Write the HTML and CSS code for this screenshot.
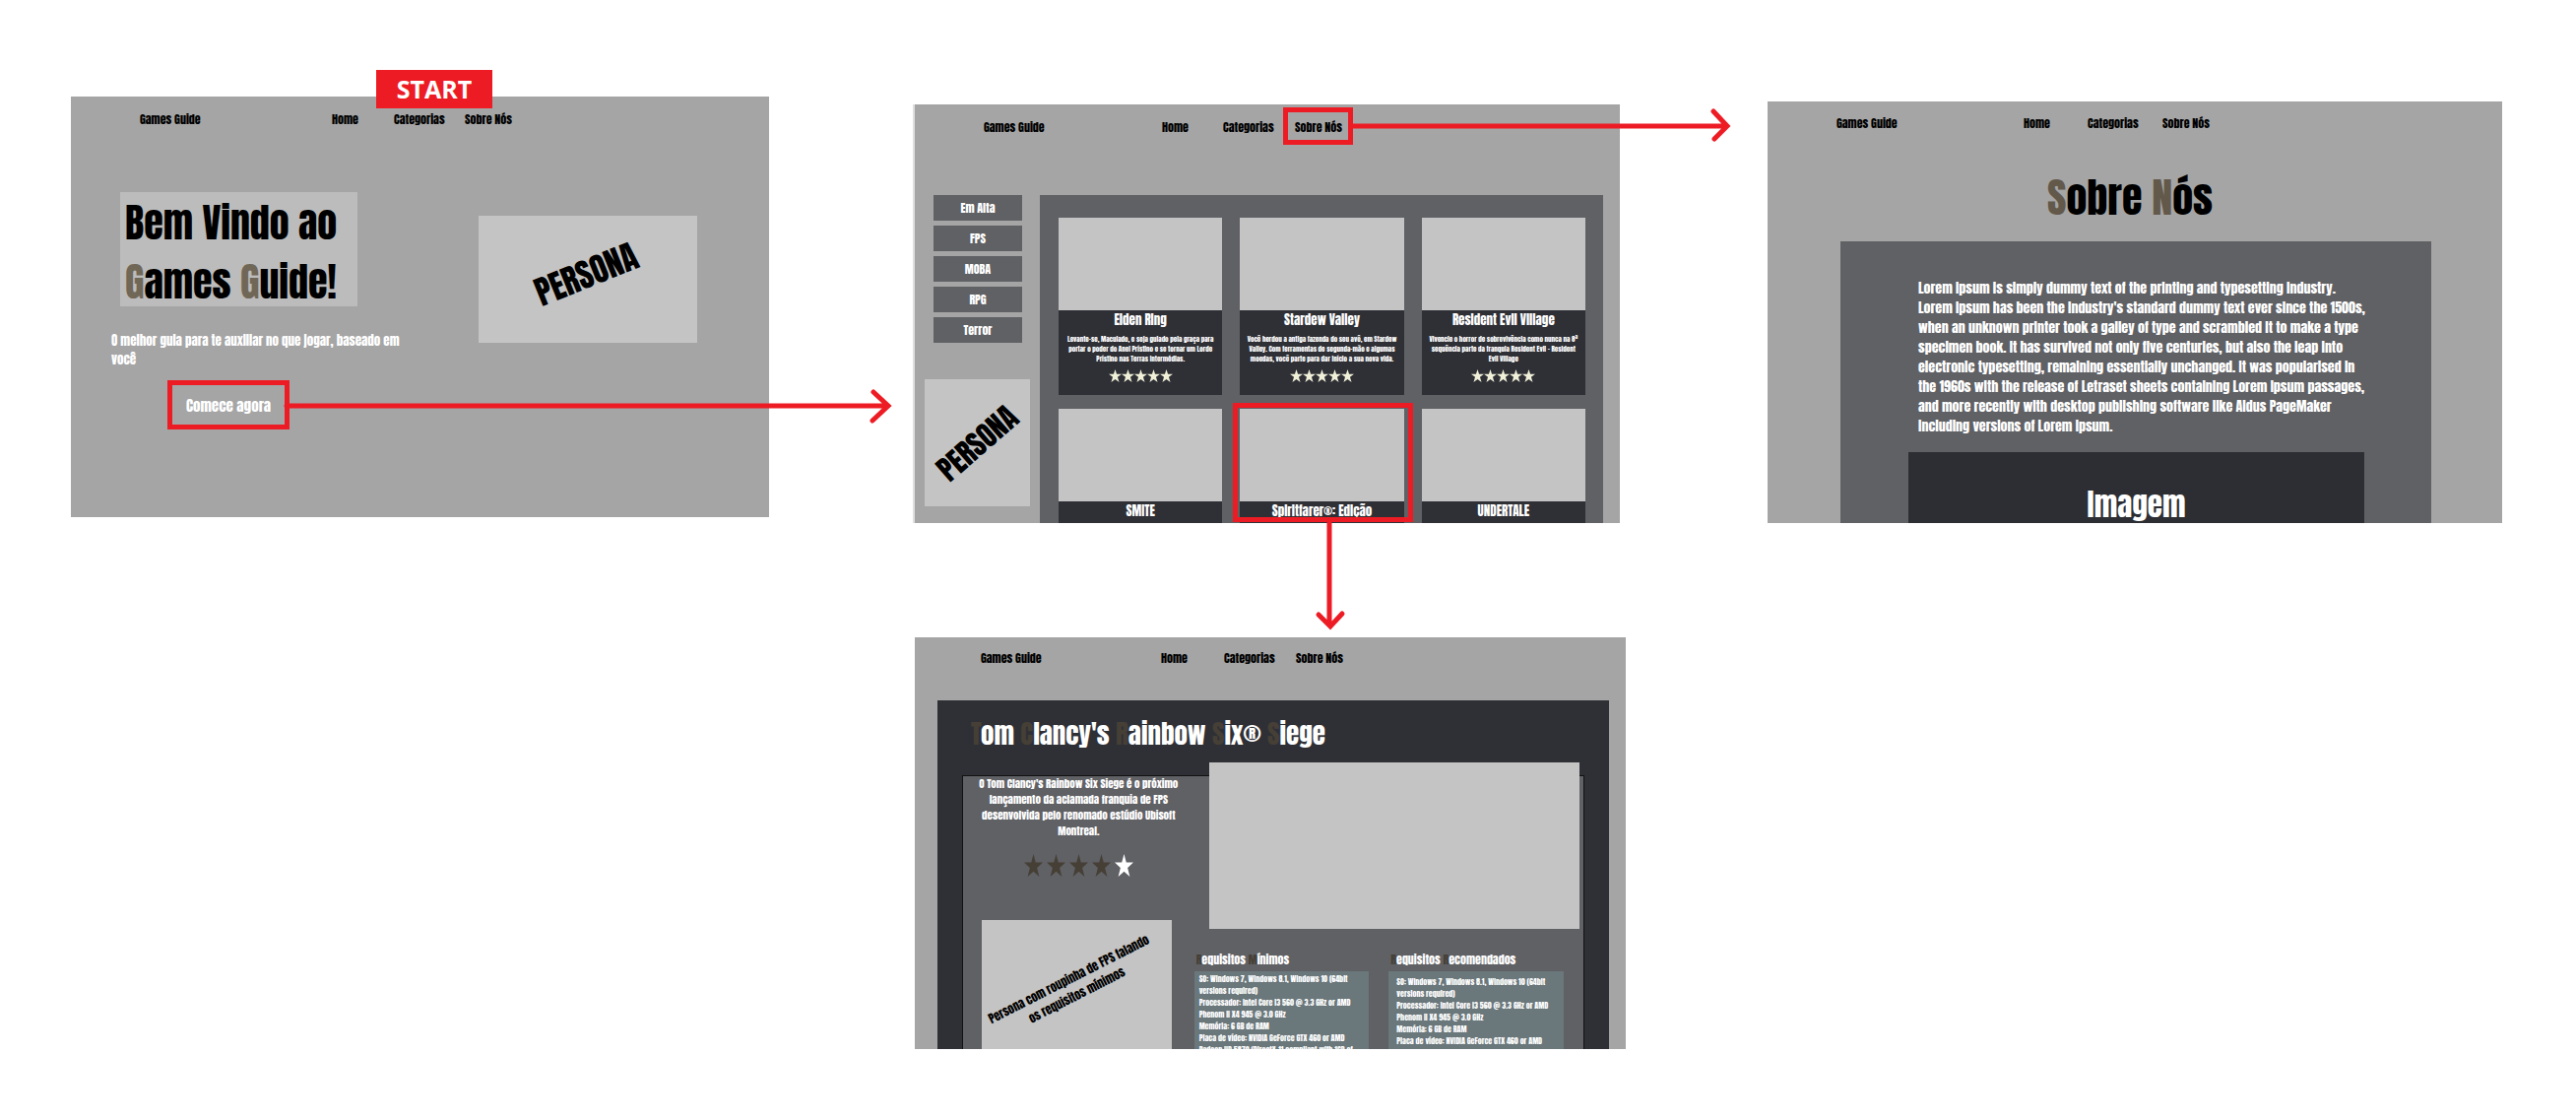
FILE: index.html
```html
<!DOCTYPE html>
<html lang="pt-BR">
<head>
<meta charset="utf-8">
<title>Games Guide – fluxo de telas</title>
<link rel="stylesheet" href="styles.css">
</head>
<body>
<svg class="defs" width="0" height="0" aria-hidden="true">
  <symbol id="star" viewBox="0 0 20 22" preserveAspectRatio="none"><path d="M10 0l2.4 8.2H20l-6.2 5.1L16.200 22 10 17l-6.200 5 2.400-8.700L0 8.200h7.600z"/></symbol>
</svg>
<main class="board">

  <section class="screen screen--home">
    <span class="start">START</span>
    <nav class="nav">
      <a href="#">Games Guide</a><a href="#">Home</a><a href="#">Categorias</a><a href="#">Sobre Nós</a>
    </nav>
    <div class="hero">
      <div class="hero__copy">
        <h1 class="hero__title">Bem Vindo ao<br><span class="tan">G</span>ames <span class="tan">G</span>uide!</h1>
        <p class="hero__text">O melhor guia para te auxiliar no que jogar, baseado em<br>você</p>
        <button class="cta" type="button">Comece agora
          <svg class="arrow arrow--cta" width="616" height="42" viewBox="0 0 616 42"><path d="M0 21H610M596 7l15 14-16 15"/></svg>
        </button>
      </div>
      <div class="hero__persona"><span>PERSONA</span></div>
    </div>
  </section>

  <section class="screen screen--list">
    <nav class="nav">
      <a href="#">Games Guide</a><a href="#">Home</a><a href="#">Categorias</a><a class="marked" href="#">Sobre Nós<svg class="arrow arrow--nav" width="388" height="42" viewBox="0 0 388 42"><path d="M0 21H380M367 6l14 15-13 13"/></svg></a>
    </nav>
    <div class="catalog">
      <aside class="side">
        <button type="button">Em Alta</button>
        <button type="button">FPS</button>
        <button type="button">MOBA</button>
        <button type="button">RPG</button>
        <button type="button">Terror</button>
        <div class="side__persona"><span>PERSONA</span></div>
      </aside>
      <div class="games">
        <article class="card">
          <div class="card__img"></div>
          <h2>Elden Ring</h2>
          <p>Levante-se, Maculado, e seja guiado pela graça para<br>portar o poder do Anel Prístino e se tornar um Lorde<br>Prístino nas Terras Intermédias.</p>
          <div class="stars"><svg><use href="#star"/></svg><svg><use href="#star"/></svg><svg><use href="#star"/></svg><svg><use href="#star"/></svg><svg><use href="#star"/></svg></div>
        </article>
        <article class="card">
          <div class="card__img"></div>
          <h2>Stardew Valley</h2>
          <p>Você herdou a antiga fazenda do seu avô, em Stardew<br>Valley. Com ferramentas de segunda-mão e algumas<br>moedas, você parte para dar início a sua nova vida.</p>
          <div class="stars"><svg><use href="#star"/></svg><svg><use href="#star"/></svg><svg><use href="#star"/></svg><svg><use href="#star"/></svg><svg><use href="#star"/></svg></div>
        </article>
        <article class="card">
          <div class="card__img"></div>
          <h2>Resident Evil Village</h2>
          <p>Vivencie o horror de sobrevivência como nunca na 8ª<br>sequência parte da franquia Resident Evil - Resident<br>Evil Village</p>
          <div class="stars"><svg><use href="#star"/></svg><svg><use href="#star"/></svg><svg><use href="#star"/></svg><svg><use href="#star"/></svg><svg><use href="#star"/></svg></div>
        </article>
        <article class="card">
          <div class="card__img"></div>
          <h2>SMITE</h2>
        </article>
        <article class="card card--marked">
          <div class="card__img"></div>
          <h2>Spiritfarer®: Edição</h2>
        </article>
        <article class="card">
          <div class="card__img"></div>
          <h2>UNDERTALE</h2>
        </article>
      </div>
    </div>
    <svg class="arrow arrow--down" width="42" height="110" viewBox="0 0 42 110"><path d="M21 0V102M10 93l12 12 12-13"/></svg>
  </section>

  <section class="screen screen--about">
    <nav class="nav">
      <a href="#">Games Guide</a><a href="#">Home</a><a href="#">Categorias</a><a href="#">Sobre Nós</a>
    </nav>
    <h1 class="about__title"><span class="tan">S</span>obre <span class="tan">N</span>ós</h1>
    <div class="about">
      <p>Lorem Ipsum is simply dummy text of the printing and typesetting industry.<br>Lorem Ipsum has been the industry's standard dummy text ever since the 1500s,<br>when an unknown printer took a galley of type and scrambled it to make a type<br>specimen book. It has survived not only five centuries, but also the leap into<br>electronic typesetting, remaining essentially unchanged. It was popularised in<br>the 1960s with the release of Letraset sheets containing Lorem Ipsum passages,<br>and more recently with desktop publishing software like Aldus PageMaker<br>including versions of Lorem Ipsum.</p>
      <div class="about__img">Imagem</div>
    </div>
  </section>

  <section class="screen screen--game">
    <nav class="nav">
      <a href="#">Games Guide</a><a href="#">Home</a><a href="#">Categorias</a><a href="#">Sobre Nós</a>
    </nav>
    <div class="game">
      <h1><span class="tan">T</span>om <span class="tan">C</span>lancy's <span class="tan">R</span>ainbow <span class="tan">S</span>ix® <span class="tan">S</span>iege</h1>
      <div class="game__body">
        <div class="game__info">
          <p>O Tom Clancy's Rainbow Six Siege é o próximo<br>lançamento da aclamada franquia de FPS<br>desenvolvida pelo renomado estúdio Ubisoft<br>Montreal.</p>
          <div class="stars stars--big"><svg><use href="#star"/></svg><svg><use href="#star"/></svg><svg><use href="#star"/></svg><svg><use href="#star"/></svg><svg><use href="#star"/></svg></div>
          <div class="game__persona"><span>Persona com roupinha de FPS falando<br>os requisitos mínimos</span></div>
        </div>
        <div class="game__media">
          <div class="game__shot"></div>
          <div class="reqs">
            <section>
              <h2><span class="tan">R</span>equisitos <span class="tan">M</span>ínimos</h2>
              <p>SO: Windows 7, Windows 8.1, Windows 10 (64bit<br>versions required)<br>Processador: Intel Core i3 560 @ 3.3 GHz or AMD<br>Phenom II X4 945 @ 3.0 GHz<br>Memória: 6 GB de RAM<br>Placa de vídeo: NVIDIA GeForce GTX 460 or AMD<br>Radeon HD 5870 (DirectX-11 compliant with 1GB of</p>
            </section>
            <section>
              <h2><span class="tan">R</span>equisitos <span class="tan">R</span>ecomendados</h2>
              <p class="reqs__rec">SO: Windows 7, Windows 8.1, Windows 10 (64bit<br>versions required)<br>Processador: Intel Core i3 560 @ 3.3 GHz or AMD<br>Phenom II X4 945 @ 3.0 GHz<br>Memória: 6 GB de RAM<br>Placa de vídeo: NVIDIA GeForce GTX 460 or AMD</p>
            </section>
          </div>
        </div>
      </div>
    </div>
  </section>

</main>
</body>
</html>
```
FILE: styles.css
```css
:root {
  --red: #ed1c24;
  --bg: #a5a5a5;
  --light: #c4c4c4;
  --panel: #606165;
  --dark: #2f3036;
}

*, *::after { box-sizing: border-box; }

body {
  margin: 0;
  background: #fff;
  font-family: Anton, "Roboto Condensed", "Open Sans Condensed", sans-serif;
  font-weight: 400;
  color: #fff;
  white-space: nowrap;
}

h1, h2, p { margin: 0; font-weight: 400; }
a { color: inherit; text-decoration: none; }
button { font: inherit; color: inherit; border: 0; padding: 0; }
.defs { position: absolute; }

/* Board: three screens on top, the game page under the middle one */
.board {
  display: grid;
  grid-template-columns: 709fr 722fr 746fr;
  column-gap: 146px;
  align-items: start;
  padding: 98px 75px 71px 72px;
}

.screen { position: relative; background: var(--bg); }
.screen--home { aspect-ratio: 709 / 427; }
.screen--list {
  display: flex;
  flex-direction: column;
  aspect-ratio: 718 / 425;
  margin: 8px 4px 0 0;
  border-left: 2px solid #dedede;
}
.screen--about {
  aspect-ratio: 746 / 428;
  margin-top: 5px;
  overflow: hidden;
}
.screen--game {
  grid-column: 2;
  aspect-ratio: 722 / 418;
  margin: 116px -2px 0 2px;
  overflow: hidden;
}

/* Navigation */
.nav {
  display: grid;
  flex: none;
  align-items: center;
  height: 46px;
  padding-left: 70px;
  font-size: 12px;
  line-height: 20px;
  color: #000;
}
.nav a { justify-self: start; }
.screen--home .nav { grid-template-columns: 195px 63px 72px 1fr; }
.screen--list .nav { grid-template-columns: 181px 62px 73px 1fr; }
.screen--about .nav { grid-template-columns: 190px 65px 76px 1fr; height: 44px; }
.screen--game .nav { grid-template-columns: 183px 64px 73px 1fr; height: 42px; padding-left: 67px; }

/* Flow marks */
.start {
  position: absolute;
  top: -27px;
  left: 310px;
  width: 118px;
  background: var(--red);
  font: 700 25px/39px "Open Sans", sans-serif;
  text-align: center;
}
.arrow {
  position: absolute;
  overflow: visible;
  fill: none;
  stroke: var(--red);
  stroke-width: 5px;
  stroke-linecap: round;
}
.arrow--cta { left: calc(100% + 2px); top: 0; }
.marked { position: relative; }
.marked::after {
  content: "";
  position: absolute;
  inset: -10px -11px -8px -12px;
  border: 5px solid var(--red);
}
.arrow--nav { left: calc(100% + 10px); top: -12px; }
.arrow--down { left: 400px; top: 100%; }

/* Home */
.hero {
  display: grid;
  grid-template-columns: 414fr 222fr 73fr;
  padding-top: 51px;
}
.hero__title {
  width: 241px;
  height: 116px;
  margin-left: 50px;
  padding: 1px 0 0 5px;
  background: #bcbcbc;
  color: #000;
  font-size: 40px;
  line-height: 60px;
}
.hero .tan { color: #716757; }
.hero__text {
  margin: 25px 0 12px 41px;
  font-size: 13px;
  line-height: 19px;
}
.cta {
  position: relative;
  width: 124px;
  height: 50px;
  margin-left: 98px;
  border: 5px solid var(--red);
  background: none;
  font-size: 15px;
}
.hero__persona,
.side__persona,
.game__persona {
  display: grid;
  place-items: center;
  background: var(--light);
  color: #000;
}
.hero__persona { height: 129px; margin-top: 24px; padding: 0 4px 12px 0; font-size: 33px; }
.hero__persona span { transform: rotate(-22deg); }

/* Catalogue */
.catalog {
  flex: 1;
  min-height: 0;
  display: grid;
  grid-template-columns: 127px 1fr;
  padding: 46px 17px 0 0;
  overflow: hidden;
}
.side {
  display: flex;
  flex-direction: column;
  gap: 5px;
  padding-left: 19px;
}
.side button {
  width: 90px;
  height: 26px;
  background: var(--panel);
  font-size: 12px;
}
.side__persona {
  width: 107px;
  height: 129px;
  margin: 32px 0 0 -9px;
  font-size: 29px;
}
.side__persona span { transform: rotate(-41deg); }
.games {
  display: grid;
  grid-template-columns: repeat(3, 1fr);
  align-items: start;
  gap: 14px 18px;
  padding: 23px 18px 0 19px;
  background: var(--panel);
}
.card { min-height: 180px; background: var(--dark); text-align: center; }
.card__img { height: 94px; background: var(--light); }
.card h2 { font-size: 13px; line-height: 20px; }
.card p { margin: 4px 0 6px; font-size: 7px; line-height: 10px; }
.card--marked { position: relative; }
.card--marked::after {
  content: "";
  position: absolute;
  inset: -6px -9px auto -7px;
  height: 121px;
  border: 5px solid var(--red);
}
.stars { display: flex; justify-content: center; fill: #f0f0d8; }
.stars svg { width: 13px; height: 13px; }

/* About */
.about__title {
  margin: 22px 0 12px;
  padding-right: 10px;
  color: #000;
  font-size: 42px;
  line-height: 64px;
  text-align: center;
}
.about__title .tan { color: #62594b; }
.about {
  height: 100%;
  margin: 0 72px 0 74px;
  padding: 38px 68px 0 69px;
  background: var(--panel);
}
.about p { margin: 0 0 16px 10px; font-size: 14px; line-height: 20px; }
.about__img {
  height: 100%;
  padding-top: 30px;
  background: #2c2e33;
  font-size: 31px;
  line-height: 46px;
  text-align: center;
}

/* Game page */
.game {
  height: 100%;
  margin: 22px 17px 0 23px;
  padding: 14px 25px 0;
  background: var(--dark);
}
.game h1 { margin: 0 0 22px 9px; font-size: 27px; line-height: 40px; }
.game .tan { color: #463f36; }
.game__body {
  display: grid;
  grid-template-columns: 235fr 396fr;
  height: 100%;
  border: 1px solid #111;
  background: var(--panel);
}
.game__info { text-align: center; }
.game__info p { font-size: 11px; line-height: 16px; }
.stars--big { gap: 4px; margin: 15px 0 44px; fill: #463f36; }
.stars--big svg { width: 19px; height: 23px; }
.stars--big svg:last-child { fill: #fff; }
.game__persona {
  height: 156px;
  margin: 0 23px 0 19px;
  padding: 0 8px 20px 0;
  font-size: 12px;
  line-height: 18px;
}
.game__persona span { transform: rotate(-27deg); }
.game__shot {
  height: 169px;
  margin: -14px 4px 22px 15px;
  background: var(--light);
}
.reqs {
  display: grid;
  grid-template-columns: 1fr 1fr;
  gap: 20px;
  padding-right: 20px;
}
.reqs h2 { margin: 0 0 3px 2px; font-size: 12px; line-height: 18px; }
.reqs p {
  height: 100px;
  padding: 2px 5px;
  background: #6a777b;
  font-size: 8px;
  line-height: 12px;
}
.reqs .reqs__rec { padding: 5px 8px; }
```
